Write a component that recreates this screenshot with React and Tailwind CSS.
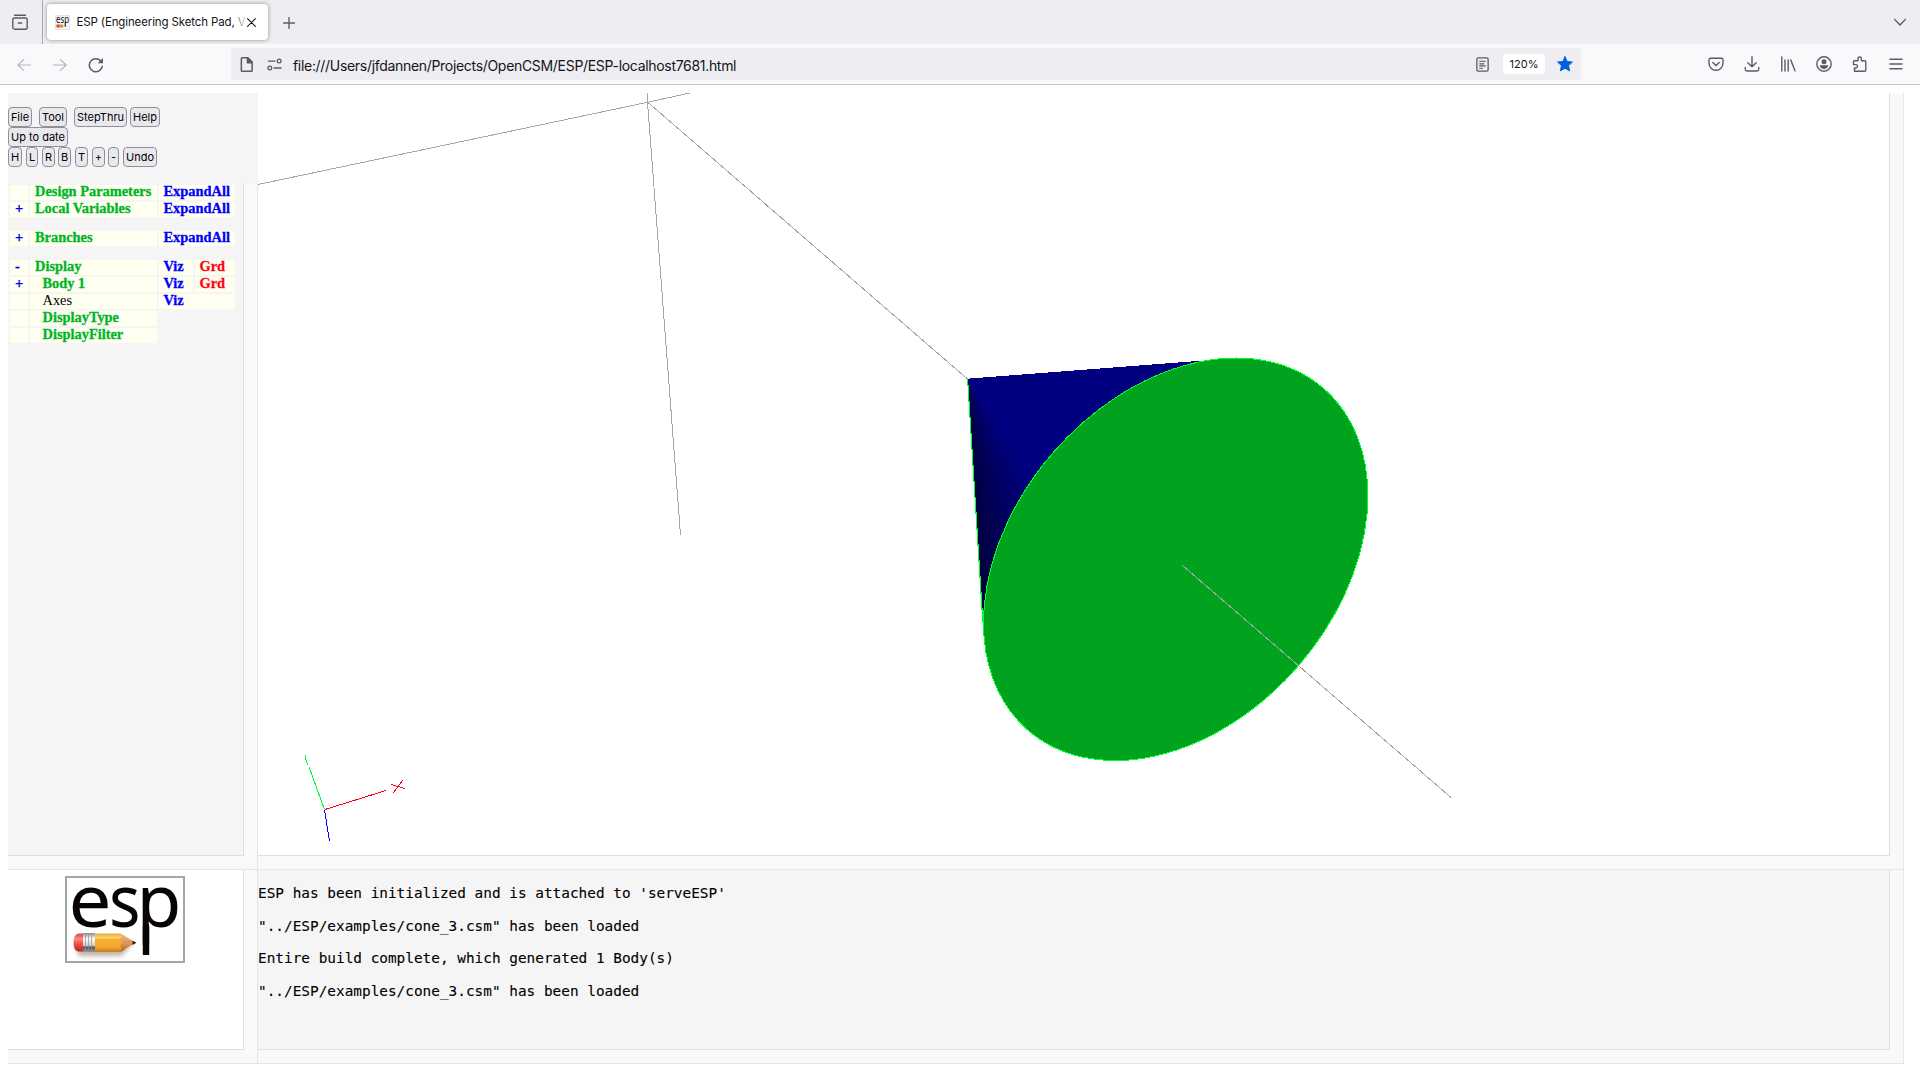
import React from "react";

const TREE = [
  { mark: "", label: "Design Parameters", cells: "all", indent: false, top: "" },
  { mark: "+", label: "Local Variables", cells: "all", indent: false, top: "mt-[2px]" },
  { mark: "+", label: "Branches", cells: "all", indent: false, top: "mt-[14px]" },
  { mark: "-", label: "Display", cells: "vizgrd", indent: false, top: "mt-[14px]" },
  { mark: "+", label: "Body 1", cells: "vizgrd", indent: true, top: "mt-[2px]" },
  { mark: "", label: "Axes", cells: "viz", indent: true, plain: true, top: "mt-[2px]" },
  { mark: "", label: "DisplayType", cells: "none", indent: true, top: "mt-[2px]" },
  { mark: "", label: "DisplayFilter", cells: "none", indent: true, top: "mt-[2px]" },
];

const MESSAGES = [
  "ESP has been initialized and is attached to 'serveESP'",
  '"../ESP/examples/cone_3.csm" has been loaded',
  "Entire build complete, which generated 1 Body(s)",
  '"../ESP/examples/cone_3.csm" has been loaded',
];

const CELL = "h-[15px] bg-[#fffff0] leading-[13px] whitespace-pre";

function TreeRow({ row }) {
  return (
    <div className={`flex gap-[2px] ${row.top}`}>
      <div className={`${CELL} w-[18px] pl-[5px] text-[#0000ff]`}>{row.mark}</div>
      <div className={`${CELL} w-[127px] ${row.indent ? "pl-[12.5px]" : "pl-[5px]"} ${row.plain ? "font-normal text-black [-webkit-text-stroke:0]" : "text-[#00b427]"}`}>
        {row.label}
      </div>
      {row.cells === "all" && <div className={`${CELL} w-[76px] pl-[4.5px] text-[#0000ff]`}>ExpandAll</div>}
      {row.cells === "viz" && <div className={`${CELL} w-[76px] pl-[4.5px] text-[#0000ff]`}>Viz</div>}
      {row.cells === "vizgrd" && (
        <>
          <div className={`${CELL} w-[34px] pl-[4.5px] text-[#0000ff]`}>Viz</div>
          <div className={`${CELL} w-[40px] pl-[4.5px] text-[#ff0013]`}>Grd</div>
        </>
      )}
    </div>
  );
}

function Btn({ w, children }) {
  return (
    <button className={`${w} flex h-5 shrink-0 items-center justify-center rounded-[4px] border border-[#8f8f9d] bg-[#e9e9ed] pt-px text-[11px] leading-none whitespace-nowrap text-black`}>
      {children}
    </button>
  );
}

function Pencil() {
  return (
    <>
      <defs>
        <linearGradient id="wood" x1="0" y1="0" x2="0" y2="1">
          <stop offset="0" stopColor="#e8a83c" />
          <stop offset="0.25" stopColor="#fbd873" />
          <stop offset="0.3" stopColor="#f8b233" />
          <stop offset="0.75" stopColor="#f3a52f" />
          <stop offset="1" stopColor="#c87a1c" />
        </linearGradient>
        <linearGradient id="rubber" x1="0" y1="0" x2="0" y2="1">
          <stop offset="0" stopColor="#d9463d" />
          <stop offset="0.3" stopColor="#ff8a7c" />
          <stop offset="0.6" stopColor="#ef4b40" />
          <stop offset="1" stopColor="#b32a22" />
        </linearGradient>
        <linearGradient id="metal" x1="0" y1="0" x2="0" y2="1">
          <stop offset="0" stopColor="#8c8c8c" />
          <stop offset="0.3" stopColor="#ffffff" />
          <stop offset="0.65" stopColor="#d0d0d0" />
          <stop offset="0.75" stopColor="#555555" />
          <stop offset="1" stopColor="#9a9a9a" />
        </linearGradient>
        <linearGradient id="tip" x1="0" y1="0" x2="0" y2="1">
          <stop offset="0" stopColor="#f0b981" />
          <stop offset="0.6" stopColor="#d99052" />
          <stop offset="1" stopColor="#b0602a" />
        </linearGradient>
        <filter id="soft" x="-20%" y="-80%" width="140%" height="260%">
          <feGaussianBlur stdDeviation="2" />
        </filter>
      </defs>
      <path d="M10 70H58L68 68L56 80H14Z" fill="#8a7a60" opacity="0.55" filter="url(#soft)" />
      <path d="M19 57.500H13Q8.500 59 8.500 66.500Q8.500 74 13 75.500H19Z" fill="url(#rubber)" />
      <rect x="18" y="57" width="12" height="19" fill="url(#metal)" />
      <path d="M20.500 57v19M23.500 57v19M26.500 57v19" stroke="#8e8e8e" strokeWidth="0.7" />
      <path d="M30 57.500H55L60 60V74L55 76H30Z" fill="url(#wood)" />
      <path d="M55 57.500L71 66.500L55 76Q58 72 55 70.500Q58 66 55 62.500Q58 60 55 57.500Z" fill="url(#tip)" />
      <path d="M67.500 64.700L71.500 66.700L67.500 69Z" fill="#222" />
    </>
  );
}

function EspLogo() {
  return (
    <svg width="120" height="87" viewBox="0 0 120 87" className="block">
      <rect x="1" y="1" width="118" height="85" fill="#fff" stroke="#a0a6aa" strokeWidth="2" />
      <Pencil />
      <g fontFamily="'Noto Sans', sans-serif" fontSize="73" fill="#080404">
        <text x="3.500" y="50.500" textLength="43" lengthAdjust="spacingAndGlyphs">e</text>
        <text x="44" y="50.500" textLength="31.500" lengthAdjust="spacingAndGlyphs">s</text>
        <text x="71.600" y="50.500">p</text>
        <rect x="77.800" y="50" width="6.400" height="29" />
      </g>
    </svg>
  );
}

const APEX = [967.5, 378.7];
const WEDGES = Array.from({ length: 60 }, (_, i) => i);

/* Shaded cone side: thin triangles fanning out from the apex. */
function ConeSide() {
  const a0 = (86.4 * Math.PI) / 180;
  const a1 = (-4.4 * Math.PI) / 180;
  const n = WEDGES.length;
  const far = (a) => {
    const r = 240;
    return `${APEX[0] + r * Math.cos(a)},${APEX[1] + r * Math.sin(a)}`;
  };
  return (
    <g shapeRendering="crispEdges">
      {WEDGES.map((i) => {
        const t = i / n;
        const s = a0 + (a1 - a0) * t;
        const e = a0 + (a1 - a0) * Math.min(1, (i + 1.3) / n);
        const b = Math.round(128 * Math.min(1, 0.5 + 0.5 * Math.pow(Math.min(1, t / 0.32), 0.75)));
        return <polygon key={i} points={`${APEX.join(",")} ${far(s)} ${far(e)}`} fill={`rgb(0,0,${b})`} />;
      })}
    </g>
  );
}

function Scene() {
  return (
    <svg width="1631" height="762" viewBox="258 93 1631 762" className="block" fill="none" shapeRendering="crispEdges">
      <g stroke="#a6a6a6" strokeWidth="1">
        <path d="M258 184.500L647.500 102.300L690 93" />
        <path d="M647 93L647.500 102L680.500 535" />
        <path d="M647.500 102L967.500 379" />
      </g>
      <ConeSide />
      <path d="M967.500 378.700L1216 359.600L1180 380L1100 400Z" fill="#000080" />
      <path d="M967.600 379L982.800 622" stroke="#00ff32" strokeWidth="1.100" />
      <ellipse cx="1175.700" cy="559.300" rx="225.900" ry="162.500" transform="rotate(-49.180 1175.700 559.300)" fill="#00a21e" stroke="#00ff32" strokeWidth="1" />
      <path d="M1182 565L1451 797.500" stroke="#a6a6a6" />
      <path d="M305.500 755V758L307.500 765M309 767L324.500 809.500" stroke="#00ff32" />
      <path d="M325 809.500L386 790.500M391 784.500L405 788.500M403 780L393 793" stroke="#ff0013" />
      <path d="M324.500 810L329.500 841" stroke="#0000ff" />
    </svg>
  );
}

const ICON = { fill: "none", stroke: "#5b5b66", strokeWidth: 1.4, strokeLinecap: "round", strokeLinejoin: "round" };

function Icon({ size = 16, className = "", children, ...rest }) {
  return (
    <svg width={size} height={size} viewBox="0 0 16 16" className={`block shrink-0 ${className}`} {...ICON} {...rest}>
      {children}
    </svg>
  );
}

function TabBar() {
  return (
    <div className="flex h-11 bg-[#ededf2]">
      <div className="flex h-full w-[43px] items-center border-r border-[#a9a9b2] pl-3">
        <Icon>
          <path d="M2.500 1.200h11" />
          <rect x="0.800" y="4" width="14.400" height="11.200" rx="2" />
          <path d="M6.300 9h3.400" />
        </Icon>
      </div>
      <div className="mt-1 ml-1 flex h-9 w-[221px] items-center rounded-[4px] bg-white pl-2 shadow-[0_0_4px_rgba(0,0,0,0.4)]">
        <svg width="15" height="15" viewBox="0 0 15 15" className="block shrink-0">
          <rect x="0.500" y="0.500" width="14" height="14" fill="#f4f4f4" stroke="#e4e4e4" />
          <text x="1" y="7.500" fontSize="11" textLength="13" lengthAdjust="spacingAndGlyphs" fontFamily="'Noto Sans', sans-serif" fill="#111">esp</text>
          <path d="M10.300 7v5" stroke="#333" />
          <rect x="1.500" y="9.500" width="7" height="3" rx="1.500" fill="#e08a35" />
          <rect x="1.500" y="9.500" width="2.500" height="3" rx="1" fill="#d9463d" />
        </svg>
        <div className="mt-px ml-[6.5px] w-[169px] overflow-hidden text-[11.5px] tracking-[-0.13px] whitespace-nowrap text-[#15141a]">
          ESP (Engineering Sketch Pad, <span className="bg-linear-to-r from-[#888] to-white bg-clip-text text-transparent">V1</span>
        </div>
        <Icon size={9} stroke="#15141a" strokeWidth="1.900" className="ml-[1.5px]">
          <path d="M1 1l14 14M15 1L1 15" />
        </Icon>
      </div>
      <div className="flex flex-1 items-center justify-between pr-[14px] pl-[15px]">
        <Icon size={12} strokeWidth="1.800" className="mt-px"><path d="M8 .8v14.400M.8 8h14.400" /></Icon>
        <Icon size={12} strokeWidth="1.900"><path d="M.8 4.500L8 12l7.200-7.500" /></Icon>
      </div>
    </div>
  );
}

function UrlBar() {
  return (
    <div className="flex h-[41px] items-center border-b border-[#c4c4c9] bg-[#f9f9fb]">
      <div className="flex w-[231px] items-center pt-px pl-[17px]">
        <Icon stroke="#b5b5bb" size={14}><path d="M15.500 8H1.500M7.500 1.800L1 8l6.500 6.200" /></Icon>
        <Icon stroke="#b5b5bb" size={14} className="ml-[22px]"><path d="M.5 8h14M8.500 1.800L15 8l-6.500 6.200" /></Icon>
        <Icon size={16} strokeWidth="1.500" className="ml-[21px]">
          <path d="M14.300 9.200A6.500 6.500 0 1 1 12.500 3.700" />
          <path d="M15 1v5.300H9.700z" fill="#5b5b66" stroke="none" />
        </Icon>
      </div>
      <div className="flex h-8 w-[1350px] items-center rounded-[4px] bg-[#ededf2] pl-2">
        <Icon size={15} strokeWidth="1.600">
          <path d="M3.500.8h6L14 5.300v9a1 1 0 0 1-1 1H3.500a1 1 0 0 1-1-1V1.800a1 1 0 0 1 1-1z" />
          <path d="M9 .8V6h5z" fill="#5b5b66" />
        </Icon>
        <Icon size={15} className="ml-[13px]">
          <path d="M1.500 4.300h7M7.500 11.700h7.500" />
          <circle cx="13" cy="4.300" r="2" />
          <circle cx="3" cy="11.700" r="2" />
        </Icon>
        <div className="mt-[2px] ml-[11px] flex-1 text-[14px] tracking-[-0.31px] whitespace-nowrap text-[#15141a]">
          file:///Users/jfdannen/Projects/OpenCSM/ESP/ESP-localhost7681.html
        </div>
        <Icon size={15}>
          <rect x="2" y="1" width="12" height="14" rx="1.500" />
          <path d="M5 4.500h6M5 7.300h4.500M5 9.500h6M5 12h3" strokeWidth="1.200" />
        </Icon>
        <div className="mr-3 ml-[13px] flex h-5 w-[42px] items-center justify-center rounded-[3px] bg-white text-[11px] text-[#15141a]">120%</div>
        <Icon stroke="#0060df" fill="#0060df" className="mr-2" strokeWidth="1">
          <path d="M8 .8l2.200 4.700 5.200.6-3.900 3.500 1.100 5.200L8 12.200l-4.600 2.600 1.100-5.200L.6 6.100l5.200-.6z" />
        </Icon>
      </div>
      <div className="flex flex-1 items-center justify-end gap-5 pr-4">
        <Icon>
          <path d="M2.500 2.300h11a1.500 1.500 0 0 1 1.500 1.500V7.300a7 7 0 0 1-14 0V3.800a1.500 1.500 0 0 1 1.500-1.500zM4.800 6.500L8 9.500l3.200-3" />
        </Icon>
        <Icon><path d="M8 .8v9.700M3.800 6.700L8 10.800l4.200-4.100M1.300 11.500v1.700a1.800 1.800 0 0 0 1.800 1.800h9.800a1.800 1.800 0 0 0 1.800-1.800v-1.700" /></Icon>
        <Icon><path d="M1.800 1v14M5 4v11M8.200 4v11M10.800 4L15 14.800" /></Icon>
        <Icon>
          <circle cx="8" cy="8" r="7.200" />
          <circle cx="8" cy="5.800" r="2.500" fill="#5b5b66" stroke="none" />
          <path d="M3.800 9.300h8.400c0 2-1.800 3.700-4.200 3.700s-4.200-1.700-4.200-3.700z" fill="#5b5b66" stroke="none" />
        </Icon>
        <Icon>
          <path d="M2.500 15.200V12h1.300a1.700 1.700 0 0 0 0-3.400H1.500V5.800a1 1 0 0 1 1-1H6V2.700a1.700 1.700 0 0 1 3.400 0v2.100h3.400a1 1 0 0 1 1 1v8.400a1 1 0 0 1-1 1z" />
        </Icon>
        <Icon><path d="M2 3.300h12M2 8h12M2 12.700h12" /></Icon>
      </div>
    </div>
  );
}

export default function App() {
  return (
    <div className="h-[1080px] w-[1920px] overflow-hidden bg-white font-['Inter',sans-serif]">
      <TabBar />
      <UrlBar />
      <div className="mt-2 ml-2 flex h-[971px] w-[1896px]">
        <div className="flex w-[250px] flex-col">
          <div className="h-[90px] bg-[#f5f5f5] pt-[14px]">
            <div className="flex">
              <Btn w="w-6">File</Btn>
              <div className="w-[7px]" />
              <Btn w="w-7">Tool</Btn>
              <div className="w-[7px]" />
              <Btn w="w-[53px]">StepThru</Btn>
              <div className="w-[3px]" />
              <Btn w="w-[30px]">Help</Btn>
            </div>
            <Btn w="w-[60px]">Up to date</Btn>
            <div className="flex gap-[3px]">
              <Btn w="w-[14px]">H</Btn>
              <Btn w="ml-px w-3">L</Btn>
              <Btn w="ml-px w-[13px]">R</Btn>
              <Btn w="w-[13px]">B</Btn>
              <Btn w="ml-px w-[13px]">T</Btn>
              <Btn w="ml-px w-[13px]">+</Btn>
              <Btn w="w-[11px]">-</Btn>
              <Btn w="ml-px w-[34px]">Undo</Btn>
            </div>
          </div>
          <div className="h-[687px] border-r border-b border-[#e6e6e6] bg-[#f9f9f9]">
            <div className="h-[673px] w-[236px] border-r border-b border-[#dfdfdf] bg-[#f5f5f5] pt-[2px] pl-[2px] font-['Liberation_Serif',serif] text-[14.4px] font-bold [-webkit-text-stroke:0.3px]">
              {TREE.map((row) => (
                <TreeRow key={row.label} row={row} />
              ))}
            </div>
          </div>
          <div className="h-[194px] border-r border-b border-[#e6e6e6] bg-[#f9f9f9]">
            <div className="h-[180px] w-[236px] border-r border-b border-[#dfdfdf] bg-white pt-[6px] pl-[57px]">
              <EspLogo />
            </div>
          </div>
        </div>
        <div className="flex w-[1646px] flex-col">
          <div className="h-[777px] border-r border-b border-[#e6e6e6] bg-[#f9f9f9]">
            <div className="h-[763px] w-[1632px] border-r border-b border-[#dfdfdf] bg-white">
              <Scene />
            </div>
          </div>
          <div className="h-[194px] border-r border-b border-[#e6e6e6] bg-[#f9f9f9]">
            <div className="h-[180px] w-[1632px] border-r border-b border-[#dfdfdf] bg-[#f5f5f5] pt-[7px] font-['DejaVu_Sans_Mono',monospace] text-[14.4px] leading-[32.6px] whitespace-pre text-black [-webkit-text-stroke:0.1px]">
              {MESSAGES.map((m, i) => (
                <div key={i}>{m}</div>
              ))}
            </div>
          </div>
        </div>
      </div>
    </div>
  );
}
